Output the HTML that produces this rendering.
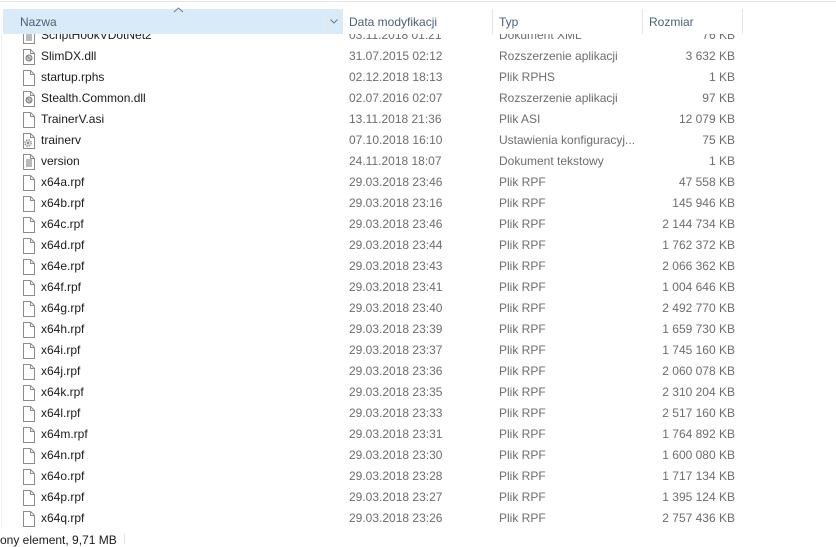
<!DOCTYPE html>
<html><head><meta charset="utf-8"><style>
body{margin:0;width:836px;height:544px;overflow:hidden;background:#fff;font-family:"Liberation Sans",sans-serif;font-size:12px;color:#1a1a1a;position:relative}
.top{position:absolute;left:0;top:1px;width:836px;height:1px;background:#e3e3e3}
.hdr{position:absolute;top:9px;height:25px;left:0;width:836px;color:#4c607a}
.hdr div{position:absolute;top:6px}
.hl{position:absolute;left:3px;top:9px;width:339px;height:25px;background:#d9ebf9}
.sep{position:absolute;top:9px;width:1px;height:25px;background:#e5e5e5}
.list{position:absolute;left:0;top:34px;width:836px;height:495px;overflow:hidden}
.r{position:absolute;left:0;height:21px;width:836px;line-height:21px}
.r span{position:absolute;white-space:nowrap}
.n{left:41px}.d{left:349px;color:#6d6d6d}.t{left:499px;color:#6d6d6d}.s{left:600px;width:135px;text-align:right;color:#6d6d6d}
.r svg{position:absolute;left:23px;top:3px}
.status{position:absolute;left:0;top:533px;font-size:12px;color:#1a1a1a}
</style></head><body>
<svg width="0" height="0" style="position:absolute"><defs>
<symbol id="f" viewBox="0 0 12 16"><path d="M0.5 0.5h7l4 4v11h-11z" fill="#fff" stroke="#8c8c8c"/><path d="M7.5 0.5v4h4" fill="none" stroke="#8c8c8c"/></symbol>
<symbol id="dl" viewBox="0 0 12 16"><path d="M0.5 0.5h7l4 4v11h-11z" fill="#fff" stroke="#8c8c8c"/><path d="M7.5 0.5v4h4" fill="none" stroke="#8c8c8c"/><circle cx="6" cy="9" r="3" fill="#ccc" stroke="#777"/><path d="M4 7l4 4" stroke="#888"/></symbol>
<symbol id="tx" viewBox="0 0 12 16"><path d="M0.5 0.5h7l4 4v11h-11z" fill="#fff" stroke="#8c8c8c"/><path d="M7.5 0.5v4h4" fill="none" stroke="#8c8c8c"/><path d="M3 6h6M3 8h6M3 10h6M3 12h6" stroke="#777"/></symbol>
<symbol id="g" viewBox="0 0 12 16"><path d="M0.5 0.5h7l4 4v11h-11z" fill="#fff" stroke="#8c8c8c"/><path d="M7.5 0.5v4h4" fill="none" stroke="#8c8c8c"/><circle cx="5" cy="10" r="3.2" fill="#ddd" stroke="#777" stroke-dasharray="1.5 1"/><circle cx="5" cy="10" r="1" fill="#777"/></symbol>
</defs></svg>
<div class="top"></div>
<div class="list">
<div class="r" style="top:-9px"><svg width="12" height="16"><use href="#tx"/></svg><span class="n">ScriptHookVDotNet2</span><span class="d">03.11.2018 01:21</span><span class="t">Dokument XML</span><span class="s">76 KB</span></div>
<div class="r" style="top:12px"><svg width="12" height="16"><use href="#dl"/></svg><span class="n">SlimDX.dll</span><span class="d">31.07.2015 02:12</span><span class="t">Rozszerzenie aplikacji</span><span class="s">3 632 KB</span></div>
<div class="r" style="top:33px"><svg width="12" height="16"><use href="#f"/></svg><span class="n">startup.rphs</span><span class="d">02.12.2018 18:13</span><span class="t">Plik RPHS</span><span class="s">1 KB</span></div>
<div class="r" style="top:54px"><svg width="12" height="16"><use href="#dl"/></svg><span class="n">Stealth.Common.dll</span><span class="d">02.07.2016 02:07</span><span class="t">Rozszerzenie aplikacji</span><span class="s">97 KB</span></div>
<div class="r" style="top:75px"><svg width="12" height="16"><use href="#f"/></svg><span class="n">TrainerV.asi</span><span class="d">13.11.2018 21:36</span><span class="t">Plik ASI</span><span class="s">12 079 KB</span></div>
<div class="r" style="top:96px"><svg width="12" height="16"><use href="#g"/></svg><span class="n">trainerv</span><span class="d">07.10.2018 16:10</span><span class="t">Ustawienia konfiguracyj...</span><span class="s">75 KB</span></div>
<div class="r" style="top:117px"><svg width="12" height="16"><use href="#tx"/></svg><span class="n">version</span><span class="d">24.11.2018 18:07</span><span class="t">Dokument tekstowy</span><span class="s">1 KB</span></div>
<div class="r" style="top:138px"><svg width="12" height="16"><use href="#f"/></svg><span class="n">x64a.rpf</span><span class="d">29.03.2018 23:46</span><span class="t">Plik RPF</span><span class="s">47 558 KB</span></div>
<div class="r" style="top:159px"><svg width="12" height="16"><use href="#f"/></svg><span class="n">x64b.rpf</span><span class="d">29.03.2018 23:16</span><span class="t">Plik RPF</span><span class="s">145 946 KB</span></div>
<div class="r" style="top:180px"><svg width="12" height="16"><use href="#f"/></svg><span class="n">x64c.rpf</span><span class="d">29.03.2018 23:46</span><span class="t">Plik RPF</span><span class="s">2 144 734 KB</span></div>
<div class="r" style="top:201px"><svg width="12" height="16"><use href="#f"/></svg><span class="n">x64d.rpf</span><span class="d">29.03.2018 23:44</span><span class="t">Plik RPF</span><span class="s">1 762 372 KB</span></div>
<div class="r" style="top:222px"><svg width="12" height="16"><use href="#f"/></svg><span class="n">x64e.rpf</span><span class="d">29.03.2018 23:43</span><span class="t">Plik RPF</span><span class="s">2 066 362 KB</span></div>
<div class="r" style="top:243px"><svg width="12" height="16"><use href="#f"/></svg><span class="n">x64f.rpf</span><span class="d">29.03.2018 23:41</span><span class="t">Plik RPF</span><span class="s">1 004 646 KB</span></div>
<div class="r" style="top:264px"><svg width="12" height="16"><use href="#f"/></svg><span class="n">x64g.rpf</span><span class="d">29.03.2018 23:40</span><span class="t">Plik RPF</span><span class="s">2 492 770 KB</span></div>
<div class="r" style="top:285px"><svg width="12" height="16"><use href="#f"/></svg><span class="n">x64h.rpf</span><span class="d">29.03.2018 23:39</span><span class="t">Plik RPF</span><span class="s">1 659 730 KB</span></div>
<div class="r" style="top:306px"><svg width="12" height="16"><use href="#f"/></svg><span class="n">x64i.rpf</span><span class="d">29.03.2018 23:37</span><span class="t">Plik RPF</span><span class="s">1 745 160 KB</span></div>
<div class="r" style="top:327px"><svg width="12" height="16"><use href="#f"/></svg><span class="n">x64j.rpf</span><span class="d">29.03.2018 23:36</span><span class="t">Plik RPF</span><span class="s">2 060 078 KB</span></div>
<div class="r" style="top:348px"><svg width="12" height="16"><use href="#f"/></svg><span class="n">x64k.rpf</span><span class="d">29.03.2018 23:35</span><span class="t">Plik RPF</span><span class="s">2 310 204 KB</span></div>
<div class="r" style="top:369px"><svg width="12" height="16"><use href="#f"/></svg><span class="n">x64l.rpf</span><span class="d">29.03.2018 23:33</span><span class="t">Plik RPF</span><span class="s">2 517 160 KB</span></div>
<div class="r" style="top:390px"><svg width="12" height="16"><use href="#f"/></svg><span class="n">x64m.rpf</span><span class="d">29.03.2018 23:31</span><span class="t">Plik RPF</span><span class="s">1 764 892 KB</span></div>
<div class="r" style="top:411px"><svg width="12" height="16"><use href="#f"/></svg><span class="n">x64n.rpf</span><span class="d">29.03.2018 23:30</span><span class="t">Plik RPF</span><span class="s">1 600 080 KB</span></div>
<div class="r" style="top:432px"><svg width="12" height="16"><use href="#f"/></svg><span class="n">x64o.rpf</span><span class="d">29.03.2018 23:28</span><span class="t">Plik RPF</span><span class="s">1 717 134 KB</span></div>
<div class="r" style="top:453px"><svg width="12" height="16"><use href="#f"/></svg><span class="n">x64p.rpf</span><span class="d">29.03.2018 23:27</span><span class="t">Plik RPF</span><span class="s">1 395 124 KB</span></div>
<div class="r" style="top:474px"><svg width="12" height="16"><use href="#f"/></svg><span class="n">x64q.rpf</span><span class="d">29.03.2018 23:26</span><span class="t">Plik RPF</span><span class="s">2 757 436 KB</span></div>
</div>
<div class="hl"></div>
<div class="sep" style="left:327px"></div>
<div class="sep" style="left:342px"></div>
<div class="sep" style="left:492px"></div>
<div class="sep" style="left:642px"></div>
<div class="sep" style="left:742px"></div>
<div class="hdr">
<div style="left:20px">Nazwa</div>
<div style="left:349px">Data modyfikacji</div>
<div style="left:499px">Typ</div>
<div style="left:649px">Rozmiar</div>
</div>
<svg style="position:absolute;left:173px;top:7px" width="11" height="6"><path d="M1 5l4.5-4 4.5 4" fill="none" stroke="#6a7a8c"/></svg>
<svg style="position:absolute;left:330px;top:19px" width="8" height="5"><path d="M0.5 0.5l3.5 3.5 3.5-3.5" fill="none" stroke="#6a7a8c"/></svg>
<div style="position:absolute;left:1px;top:34px;width:1px;height:495px;background:#eee"></div>
<div class="status">ony element, 9,71 MB</div>
<div style="position:absolute;left:124px;top:534px;width:1px;height:10px;background:#e5e5e5"></div>
</body></html>
